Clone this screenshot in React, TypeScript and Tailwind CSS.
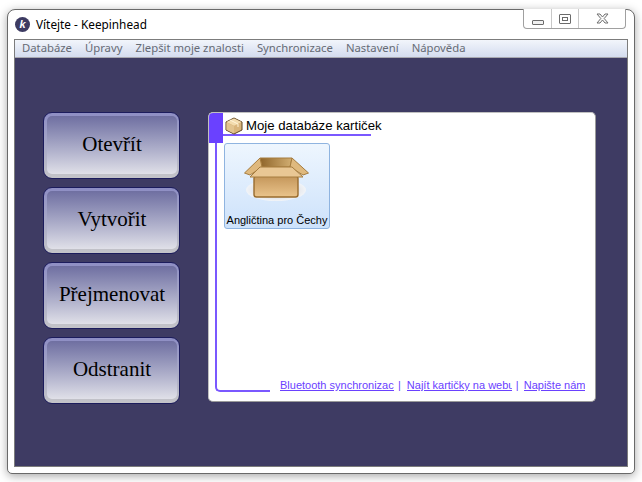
import type { ReactNode } from 'react'

const MENU = ['Databáze', 'Úpravy', 'Zlepšit moje znalosti', 'Synchronizace', 'Nastavení', 'Nápověda']
const ACTIONS = ['Otevřít', 'Vytvořit', 'Přejmenovat', 'Odstranit']

function ActionButton(props: { children: ReactNode }) {
  return (
    <button
      type="button"
      className="h-[67px] w-[137px] rounded-[9px] border border-[#1c1c5c] bg-gradient-to-b from-[#8e8ec4] to-[#c4c4c8] pt-[3px] pr-[2px] pb-[4px] pl-[3px]"
    >
      <span className="flex h-full w-full items-center justify-center rounded-[5px] bg-gradient-to-b from-[#6f6fa1] to-[#e0e0e8] font-['Liberation_Serif',serif] text-[21px] text-black">
        {props.children}
      </span>
    </button>
  )
}

function KLogo() {
  return (
    <span className="flex h-[15px] w-[15px] items-center justify-center rounded-full bg-[#3d3b62] font-['Liberation_Sans',sans-serif] text-[11px] font-bold italic leading-none text-white">
      k
    </span>
  )
}

function SmallBox() {
  return (
    <svg width="18" height="18" viewBox="0 0 18 18" className="shrink-0">
      <path d="M9 1 L17 5 V13 L9 17 L1 13 V5 Z" fill="#d9b57c" stroke="#5e4520" strokeWidth="1" strokeLinejoin="round" />
      <path d="M1.5 5 L9 8.8 L16.5 5 L9 1.5 Z" fill="#f3dcae" />
      <path d="M9 9 V16.5 L1.5 12.8 V5.5 Z" fill="#e2c48f" />
      <path d="M5 3 L13 7 V10" fill="none" stroke="#fff4d8" strokeWidth="1" />
    </svg>
  )
}

function BigBox() {
  return (
    <svg width="66" height="46" viewBox="0 0 66 46" className="shrink-0">
      <defs>
        <linearGradient id="front" x1="0" y1="0" x2="0" y2="1">
          <stop offset="0" stopColor="#c4965a" />
          <stop offset="1" stopColor="#eac48c" />
        </linearGradient>
        <linearGradient id="inside" x1="0" y1="0" x2="1" y2="0">
          <stop offset="0" stopColor="#8f652a" />
          <stop offset="1" stopColor="#d2ae72" />
        </linearGradient>
        <radialGradient id="floor">
          <stop offset="0" stopColor="#b8b8b8" />
          <stop offset="0.75" stopColor="#e6e8ec" />
          <stop offset="1" stopColor="#f1f4f8" />
        </radialGradient>
      </defs>
      <ellipse cx="32" cy="34" rx="30" ry="11" fill="url(#floor)" />
      <path d="M16 2 H48 L46 11 H18 Z" fill="url(#inside)" stroke="#a67c3e" strokeWidth="1" />
      <path d="M16 2 L0.5 17 L6 19 L18 11 Z" fill="#dfb97e" stroke="#a67c3e" strokeWidth="1" strokeLinejoin="round" />
      <path d="M48 2 L64.5 17 L59 19 L46 11 Z" fill="#dfb97e" stroke="#a67c3e" strokeWidth="1" strokeLinejoin="round" />
      <rect x="10" y="20" width="44" height="21" rx="2.5" fill="url(#front)" stroke="#996c2e" strokeWidth="1.4" />
      <path d="M6 21 L16 11 H48 L59 21 Z" fill="#e9c794" stroke="#a67c3e" strokeWidth="1" strokeLinejoin="round" />
    </svg>
  )
}

function WindowButtons() {
  return (
    <div className="flex h-[20px] w-[103px] rounded-b-[4px] border border-t-0 border-[#a0a0a0] bg-white">
      <div className="flex w-[28px] items-end justify-center border-r border-[#c8c8c8] pb-[3px]">
        <div className="h-[5px] w-[12px] rounded-[1px] border border-[#6b6b6b] bg-[#f0f0f0]" />
      </div>
      <div className="flex w-[27px] items-center justify-center border-r border-[#c8c8c8]">
        <div className="flex h-[10px] w-[12px] items-center justify-center rounded-[1px] border border-[#6b6b6b]">
          <div className="h-[4px] w-[6px] border border-[#6b6b6b]" />
        </div>
      </div>
      <div className="flex flex-1 items-center justify-center">
        <svg width="13" height="11" viewBox="0 0 13 11">
          <path d="M1 1 H4 L6.5 4 L9 1 H12 L8.2 5.5 L12 10 H9 L6.5 7 L4 10 H1 L4.8 5.5 Z" fill="#fafafa" stroke="#707070" strokeWidth="1" />
        </svg>
      </div>
    </div>
  )
}

function FooterLink(props: { className: string; children: ReactNode }) {
  return (
    <a className={`block overflow-hidden whitespace-nowrap text-[#6a41ff] underline ${props.className}`}>{props.children}</a>
  )
}

export default function App() {
  return (
    <div className="h-[482px] w-[642px] overflow-hidden bg-white pt-[9px] pl-[7px] font-['Noto_Sans',sans-serif]">
      <div className="flex h-[465px] w-[628px] flex-col rounded-t-[8px] rounded-b-[5px] border border-[#6a6a6a] bg-white px-[6px] pb-[6px] shadow-[0_2px_10px_rgba(0,0,0,0.35)]">
        <div className="flex h-[29px] shrink-0 items-start justify-between">
          <div className="flex h-full items-center gap-[6px] pl-[1px] text-[11.8px] text-black">
            <KLogo />
            <span>Vítejte - Keepinhead</span>
          </div>
          <div className="-mt-px mr-[2px]">
            <WindowButtons />
          </div>
        </div>
        <div className="flex min-h-0 flex-1 flex-col border border-[#7c7c7c]">
          <div className="flex h-[18px] shrink-0 items-center gap-[13px] border-b border-[#a8a8b0] bg-gradient-to-b from-[#f2f5fb] to-[#d4dcef] pl-[7px] text-[11.3px] text-[#666b75]">
            {MENU.map((m) => (
              <span key={m}>{m}</span>
            ))}
          </div>
          <div className="flex min-h-0 flex-1 gap-[28px] bg-[#3e3b63] pt-[54px] pl-[28px]">
            <div className="flex flex-col gap-[8px]">
              {ACTIONS.map((a) => (
                <ActionButton key={a}>{a}</ActionButton>
              ))}
            </div>
            <div className="flex h-[290px] w-[388px] flex-col rounded-[5px] border border-[#c0c0c0] border-r-[#9a9a9a] border-b-[#9a9a9a] bg-white">
              <div className="flex h-[30px] shrink-0">
                <div className="h-full w-[14px] rounded-tl-[4px] bg-[#6a41ff]" />
                <div className="flex h-[23px] w-[148px] items-center gap-[3px] border-b-2 border-[#7a58ff] pt-[4px] pl-[2px] font-['Liberation_Sans',sans-serif] text-[13.2px] whitespace-nowrap text-black">
                  <SmallBox />
                  <span>Moje databáze kartiček</span>
                </div>
              </div>
              <div className="ml-[6px] flex min-h-0 flex-1 flex-col pb-[8px]">
                <div className="min-h-0 flex-1 border-l-2 border-[#7a58ff] pl-[7px]">
                  <div className="flex h-[86px] w-[106px] flex-col items-center rounded-[3px] border border-[#8fb4e0] bg-gradient-to-b from-[#eef6fe] to-[#cde2fb] pt-[12px]">
                    <BigBox />
                    <span className="mt-[12px] font-['Liberation_Sans',sans-serif] text-[11px] leading-[13px] whitespace-nowrap text-black">Angličtina pro Čechy</span>
                  </div>
                </div>
                <div className="flex h-[13px] shrink-0">
                  <div className="h-[12px] w-[55px] rounded-bl-[5px] border-b-2 border-l-2 border-[#7a58ff]" />
                  <div className="-mt-[2px] ml-[10px] flex h-[14px] items-start gap-[4px] font-['Liberation_Sans',sans-serif] text-[11px] leading-[14px]">
                    <FooterLink className="w-[114px]">Bluetooth synchronizace</FooterLink>
                    <span className="text-[#6a41ff]">|</span>
                    <FooterLink className="ml-[2px] w-[105px]">Najít kartičky na webu</FooterLink>
                    <span className="text-[#6a41ff]">|</span>
                    <FooterLink className="ml-[1px] w-[61px]">Napište nám</FooterLink>
                  </div>
                </div>
              </div>
            </div>
          </div>
        </div>
      </div>
    </div>
  )
}
